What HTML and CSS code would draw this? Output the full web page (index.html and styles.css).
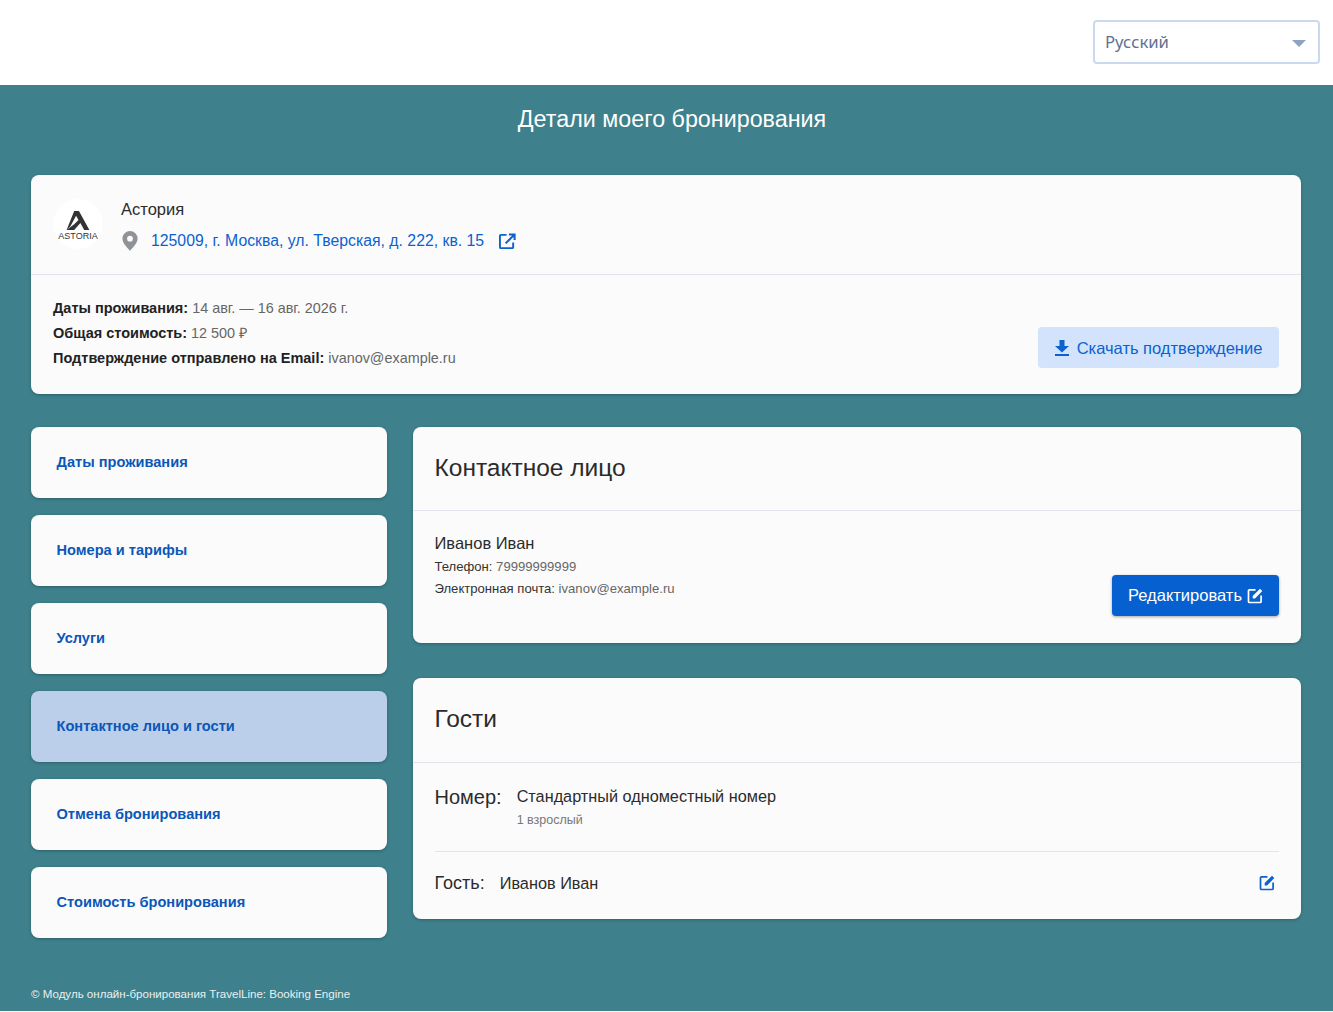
FILE: index.html
```html
<!DOCTYPE html>
<html lang="ru">
<head>
    <meta charset="UTF-8">
    <meta name="viewport" content="width=device-width, initial-scale=1.0">
    <title>Детали моего бронирования</title>
    <link rel="stylesheet" href="styles.css">
</head>
<body>
    <!-- выбор языка -->
    <header class="top-bar">
        <div class="lang-select">
            <span class="lang-name">Русский</span>
            <i class="lang-arrow"></i>
        </div>
    </header>

    <main class="page">
        <h1 class="page-title">Детали моего бронирования</h1>

        <!-- отель и сводка -->
        <section class="card hotel-card">
            <div class="hotel-head">
                <div class="logo">
                    <svg class="logo-mark" viewBox="0 0 26 20" width="26" height="19">
                        <path fill="#333" d="M9 0h5l11 20h-5.500l-4-7.500L9 20H1l8-6 4.500-4.500L11 5 5 16l-4 4z"/>
                    </svg>
                    <span class="logo-text">ASTORIA</span>
                </div>
                <div>
                    <div class="hotel-name">Астория</div>
                    <div class="hotel-address">
                        <svg class="pin" viewBox="0 0 16 20" width="16" height="20">
                            <path fill="#8f9296" fill-rule="evenodd" d="M8 0a7.600 7.600 0 0 1 7.600 7.600C15.600 12.500 10 17.500 8 20 6 17.500.4 12.500.4 7.600A7.600 7.600 0 0 1 8 0zm0 4.800a2.900 2.900 0 1 0 0 5.800 2.900 2.900 0 0 0 0-5.800z"/>
                        </svg>
                        <a href="#" class="link">125009, г. Москва, ул. Тверская, д. 222, кв. 15</a>
                        <svg class="open-icon" viewBox="0 0 18 18" width="17" height="17">
                            <path fill="none" stroke="#0b62cf" stroke-width="2" d="M8 2H2a1 1 0 0 0-1 1v12a1 1 0 0 0 1 1h12a1 1 0 0 0 1-1v-5"/>
                            <path fill="none" stroke="#0b62cf" stroke-width="2.200" d="M7 11 16 2M10.500 1.500H16.500V7.500"/>
                        </svg>
                    </div>
                </div>
            </div>
            <div class="hotel-info">
                <div class="info-list">
                    <div><b>Даты проживания:</b> 14 авг. — 16 авг. 2026 г.</div>
                    <div><b>Общая стоимость:</b> 12 500 ₽</div>
                    <div><b>Подтверждение отправлено на Email:</b> ivanov@example.ru</div>
                </div>
                <a href="#" class="btn btn-light">
                    <svg viewBox="0 0 14 16" width="14" height="16">
                        <path fill="#0b62cf" d="M4.500 0h5v6H14L7 12.500 0 6h4.500zM0 14h14v2H0z"/>
                    </svg>
                    Скачать подтверждение
                </a>
            </div>
        </section>

        <div class="columns">
            <!-- разделы -->
            <nav class="side-menu">
                <a href="#" class="menu-item">Даты проживания</a>
                <a href="#" class="menu-item">Номера и тарифы</a>
                <a href="#" class="menu-item">Услуги</a>
                <a href="#" class="menu-item active">Контактное лицо и гости</a>
                <a href="#" class="menu-item">Отмена бронирования</a>
                <a href="#" class="menu-item">Стоимость бронирования</a>
            </nav>

            <div class="content">
                <section class="card">
                    <h2 class="card-title">Контактное лицо</h2>
                    <div class="contact-body">
                        <div>
                            <div class="person-name">Иванов Иван</div>
                            <div class="contact-line"><span>Телефон:</span> 79999999999</div>
                            <div class="contact-line"><span>Электронная почта:</span> ivanov@example.ru</div>
                        </div>
                        <a href="#" class="btn btn-primary">
                            Редактировать
                            <svg viewBox="0 0 16 16" width="16" height="16">
                                <path fill="none" stroke="#fff" stroke-width="1.700" d="M8.500 1.900H2.500a1 1 0 0 0-1 1v10.600a1 1 0 0 0 1 1h10.600a1 1 0 0 0 1-1V7.500"/>
                                <path fill="#fff" d="M13 .8 15.300 3.100 8 10.400H5.700V8.100z"/>
                            </svg>
                        </a>
                    </div>
                </section>

                <section class="card">
                    <h2 class="card-title guests-title">Гости</h2>
                    <div class="guests-body">
                        <div class="room-row">
                            <div class="room-label">Номер:</div>
                            <div>
                                <div class="room-name">Стандартный одноместный номер</div>
                                <div class="room-people">1 взрослый</div>
                            </div>
                        </div>
                        <div class="guest-row">
                            <span class="guest-label">Гость:</span>
                            <span class="guest-name">Иванов Иван</span>
                            <svg class="guest-edit" viewBox="0 0 16 16" width="16" height="16">
                                <path fill="none" stroke="#0b62cf" stroke-width="1.700" d="M8.500 1.900H2.500a1 1 0 0 0-1 1v10.600a1 1 0 0 0 1 1h10.600a1 1 0 0 0 1-1V7.500"/>
                                <path fill="#0b62cf" d="M13 .8 15.300 3.100 8 10.400H5.700V8.100z"/>
                            </svg>
                        </div>
                    </div>
                </section>
            </div>
        </div>

        <footer class="page-footer">© Модуль онлайн-бронирования TravelLine: Booking Engine</footer>
    </main>
</body>
</html>
```

FILE: styles.css
```css
*{
    margin: 0;
    padding: 0;
    box-sizing: border-box;
}
body{
    background-color: #fff;
    color: #2b2b2b;
    font-family: "Liberation Sans", Arial, sans-serif;
    height: 1011px;
    overflow: hidden;
}
a{
    text-decoration: none;
}
.top-bar{
    display: flex;
    justify-content: flex-end;
    align-items: center;
    height: 85px;
    padding: 0 13px 1px 0;
}
.lang-select{
    display: flex;
    justify-content: space-between;
    align-items: center;
    width: 227px;
    height: 44px;
    padding: 0 12px 0 10px;
    border: 2px solid #cbd9ef;
    border-radius: 4px;
    color: #5f7190;
    font-family: "Noto Sans", sans-serif;
    font-size: 16.700px;
}
.lang-name{
    padding-bottom: 2px;
}
.lang-arrow{
    width: 0;
    height: 0;
    margin-top: 2px;
    border-left: 7px solid transparent;
    border-right: 7px solid transparent;
    border-top: 7px solid #8ea3c2;
}
.page{
    height: 926px;
    padding: 0 32px 0 31px;
    background-color: #3e808b;
}
.page-title{
    height: 90px;
    padding: 20px 0 0 12px;
    color: #fff;
    font-size: 23.300px;
    font-weight: normal;
    line-height: 28px;
    text-align: center;
}
.card{
    background-color: #fbfbfc;
    border-radius: 8px;
    box-shadow: 0 1px 3px rgba(0, 0, 0, .25);
}
.hotel-card{
    height: 219px;
}
.hotel-head{
    display: flex;
    gap: 18px;
    height: 100px;
    padding: 24px 22px 0;
    border-bottom: 1px solid #e1e4ea;
}
.logo{
    display: flex;
    flex-direction: column;
    align-items: center;
    width: 50px;
    height: 50px;
    padding-top: 12px;
    border-radius: 50%;
    background-color: #fff;
}
.logo-mark{
    display: block;
}
.logo-text{
    margin-top: 2px;
    color: #333;
    font-size: 9px;
    line-height: 9px;
}
.hotel-name{
    height: 21px;
    font-size: 16.500px;
    line-height: 21px;
}
.hotel-address{
    display: flex;
    align-items: center;
    margin-top: 11px;
    height: 20px;
}
.pin{
    margin-right: 13px;
    margin-left: 1px;
}
.link{
    color: #0b62cf;
    font-size: 15.800px;
}
.open-icon{
    margin-left: 15px;
}
.hotel-info{
    display: flex;
    justify-content: space-between;
    align-items: flex-end;
    padding: 21px 22px 0;
}
.info-list{
    color: #666;
    font-size: 14.400px;
    line-height: 25px;
}
.info-list b{
    color: #222;
    font-size: 14.500px;
}
.btn{
    display: flex;
    align-items: center;
    justify-content: center;
    height: 41px;
    border-radius: 4px;
    font-size: 16.500px;
}
.btn-light{
    gap: 8px;
    width: 241px;
    margin-bottom: 3px;
    padding-top: 1px;
    background-color: #d3e3fb;
    color: #0b62cf;
}
.btn-primary{
    gap: 5px;
    width: 167px;
    background-color: #0660d0;
    box-shadow: 0 1px 3px rgba(0, 0, 0, .35);
    color: #fff;
}
.columns{
    display: flex;
    gap: 26px;
    margin-top: 33px;
}
.side-menu{
    display: flex;
    flex-direction: column;
    gap: 17px;
    width: 356px;
}
.menu-item{
    display: flex;
    align-items: center;
    height: 71px;
    padding: 0 0 2px 25.500px;
    background-color: #fbfbfc;
    border-radius: 8px;
    box-shadow: 0 1px 3px rgba(0, 0, 0, .25);
    color: #0b57b8;
    font-size: 14.600px;
    font-weight: bold;
}
.menu-item.active{
    background-color: #bbcfea;
}
.content{
    display: flex;
    flex-direction: column;
    gap: 35px;
    width: 888px;
}
.card-title{
    height: 84px;
    padding: 25px 21.500px 0;
    border-bottom: 1px solid #e1e4ea;
    font-size: 24.500px;
    font-weight: normal;
    line-height: 32px;
}
.guests-title{
    height: 85px;
}
.contact-body{
    display: flex;
    justify-content: space-between;
    height: 132px;
    padding: 23px 22px 0 21.500px;
}
.person-name{
    margin-bottom: 2px;
    font-size: 16.500px;
    line-height: 19px;
}
.contact-line{
    margin-top: 4px;
    color: #666;
    font-size: 13.100px;
    line-height: 19px;
}
.contact-line + .contact-line{
    margin-top: 3px;
}
.contact-line span{
    color: #333;
}
.contact-body .btn{
    margin-top: 41px;
}
.guests-body{
    padding: 0 22px 0 21.500px;
}
.room-row{
    display: flex;
    gap: 15px;
    height: 89px;
    padding-top: 22px;
    border-bottom: 1px solid #e1e4ea;
}
.room-label{
    padding-top: 1px;
    font-size: 20px;
    line-height: 22px;
}
.room-name{
    font-size: 16.250px;
    line-height: 22px;
}
.room-people{
    margin-top: 5px;
    color: #777;
    font-size: 12.500px;
    line-height: 16px;
}
.guest-row{
    display: flex;
    align-items: center;
    gap: 15px;
    height: 67px;
    padding-bottom: 4px;
}
.guest-label{
    font-size: 18px;
}
.guest-name{
    font-size: 16.300px;
}
.guest-edit{
    margin: 0 4px 2px auto;
}
.page-footer{
    margin-top: 48px;
    color: #e8f0f2;
    font-size: 11.550px;
    line-height: 16px;
}
```
